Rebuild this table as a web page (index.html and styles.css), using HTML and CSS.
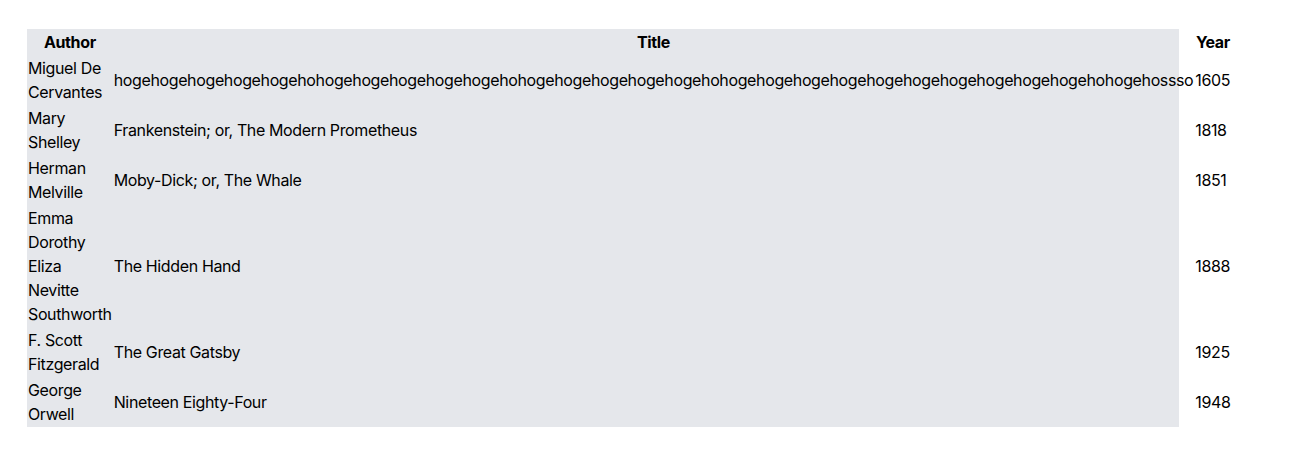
FILE: index.html
```html
<!DOCTYPE html>
<html lang="en">
<head>
<meta charset="utf-8">
<title>Books</title>
<link rel="stylesheet" href="styles.css">
</head>
<body>
<div class="wrap">
  <table class="books">
    <thead>
      <tr><th>Author</th><th>Title</th><th>Year</th></tr>
    </thead>
    <tbody>
      <tr><td>Miguel De Cervantes</td><td>hogehogehogehogehogehohogehogehogehogehogehohogehogehogehogehogehohogehogehogehogehogehogehogehogehogehogehohogehossso</td><td>1605</td></tr>
      <tr><td>Mary Shelley</td><td>Frankenstein; or, The Modern Prometheus</td><td>1818</td></tr>
      <tr><td>Herman Melville</td><td>Moby-Dick; or, The Whale</td><td>1851</td></tr>
      <tr><td>Emma Dorothy Eliza Nevitte Southworth</td><td>The Hidden Hand</td><td>1888</td></tr>
      <tr><td>F. Scott Fitzgerald</td><td>The Great Gatsby</td><td>1925</td></tr>
      <tr><td>George Orwell</td><td>Nineteen Eighty-Four</td><td>1948</td></tr>
    </tbody>
  </table>
</div>
</body>
</html>
```
FILE: styles.css
```css
html, body {
  margin: 0;
  padding: 0;
  background: #ffffff;
}
body {
  font-family: Inter, "Noto Sans", sans-serif;
  font-size: 16px;
  line-height: 24px;
  letter-spacing: -0.37px;
  color: #000000;
}
.wrap {
  width: 1152px;
  margin: 29px 0 0 27px;
  background: #e5e7eb;
}
.books {
  border-collapse: collapse;
  text-indent: 0;
  border-color: inherit;
}
.books th,
.books td {
  padding: 1px;
  vertical-align: middle;
}
.books th {
  font-weight: 700;
  text-align: center;
}
.books td {
  text-align: left;
}
```
